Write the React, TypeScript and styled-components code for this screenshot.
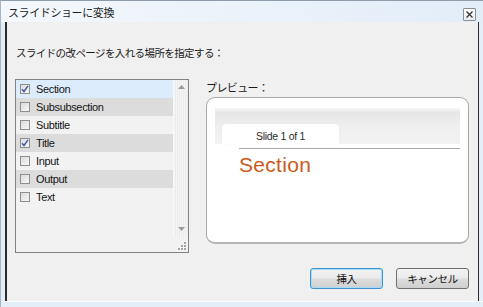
import React from "react";
import styled, { createGlobalStyle, css } from "styled-components";

const Global = createGlobalStyle`
  html, body { margin: 0; padding: 0; background: #e6eff9; }
  body { font-family: "Noto Sans CJK JP", "Liberation Sans", sans-serif; }
  * { box-sizing: border-box; }
`;

const JP = `"Noto Sans CJK JP", "Liberation Sans", sans-serif`;
const LAT = `"Liberation Sans", Arial, sans-serif`;

const Window = styled.div`
  width: 483px;
  height: 307px;
  display: flex;
  flex-direction: column;
  overflow: hidden;
  background: #e4eef9;
  border-top: 1px solid #8e9bab;
  border-left: 1px solid #a9b5c3;
`;

const TitleBar = styled.div`
  height: 21px;
  flex: none;
  display: flex;
  align-items: center;
  justify-content: space-between;
  padding: 0 7px 0 7px;
  background: linear-gradient(to right, #f4f8fc, #e9f1fa 60%, #e3edf8);
`;

const Title = styled.span`
  font-family: ${JP};
  font-size: 11px;
  letter-spacing: -0.4px;
  color: #1f1f1f;
  margin-top: 1px;
`;

const CloseBtn = styled.div`
  width: 13px;
  height: 13px;
  margin-top: 5px;
  border: 1px solid #8a8f96;
  border-radius: 1px;
  background: linear-gradient(#ffffff, #e9ecef);
  display: flex;
  align-items: center;
  justify-content: center;
`;

const Middle = styled.div`
  flex: none;
  height: 279px;
  display: flex;
`;

const SideFrame = styled.div<{ $w: number }>`
  width: ${(p) => p.$w}px;
  flex: none;
`;

const Client = styled.div`
  flex: 1;
  background: #f0f0f0;
  border-left: 2px solid #2c2c2c;
  border-right: 1px solid #2c2c2c;
  padding: 23px 9px 0 8px;
  display: flex;
  flex-direction: column;
`;

const Prompt = styled.div`
  font-family: ${JP};
  font-size: 10.5px;
  line-height: 16px;
  height: 16px;
  letter-spacing: -0.6px;
  color: #1a1a1a;
  padding-left: 1px;
`;

const MainRow = styled.div`
  margin-top: 18px;
  display: flex;
  gap: 17px;
  align-items: flex-start;
`;

const ListBox = styled.div`
  width: 174px;
  height: 174px;
  border: 1px solid #828282;
  background: #f2f2f2;
  display: flex;
  position: relative;
`;

const Rows = styled.div`
  width: 157px;
  height: 122px;
  overflow: hidden;
  flex: none;
`;

const Row = styled.div<{ $tone: "sel" | "alt" | "plain" }>`
  height: 18px;
  display: flex;
  align-items: center;
  padding-left: 4px;
  gap: 6px;
  font-family: ${LAT};
  font-size: 11px;
  letter-spacing: -0.35px;
  color: #141414;
  ${(p) =>
    p.$tone === "sel"
      ? css`background: #dcecfc;`
      : p.$tone === "alt"
      ? css`background: #dcdcdc;`
      : css`background: transparent;`}
`;

const Check = styled.div`
  width: 10px;
  height: 10px;
  border: 1px solid #8e8f8f;
  background: linear-gradient(135deg, #dcdcdc, #f6f6f6);
  flex: none;
  display: flex;
  align-items: center;
  justify-content: center;
`;

const Scroll = styled.div`
  width: 15px;
  height: 157px;
  background: repeating-linear-gradient(90deg, #f4f4f4 0 1px, #ececec 1px 2px);
  border-left: 1px solid #f8f8f8;
  display: flex;
  flex-direction: column;
  justify-content: space-between;
  align-items: center;
  padding: 5px 0 6px;
`;

const Grip = styled.svg`
  position: absolute;
  right: 1px;
  bottom: 1px;
`;

const PreviewCol = styled.div`
  display: flex;
  flex-direction: column;
`;

const PreviewLabel = styled.div`
  font-family: ${JP};
  font-size: 11px;
  line-height: 14px;
  height: 14px;
  letter-spacing: -0.6px;
  color: #1a1a1a;
  margin-bottom: 3px;
  margin-top: 1px;
`;

const PreviewBox = styled.div`
  width: 263px;
  height: 147px;
  background: #ffffff;
  border: 1px solid #a9a9a9;
  border-bottom: 2px solid #b4b4b4;
  border-radius: 9px;
  padding: 10px 8px 0 8px;
  display: flex;
  flex-direction: column;
`;

const Band = styled.div`
  height: 36px;
  background: linear-gradient(#f7f7f7 0px, #e6e6e6 5px, #eeeeee 18px, #f3f3f3 36px);
  display: flex;
  align-items: flex-end;
  padding-left: 7px;
`;

const Tab = styled.div`
  width: 117px;
  height: 20px;
  background: #ffffff;
  border-radius: 4px 4px 0 0;
  box-shadow: 0 0 1px #d6d6d6;
  display: flex;
  align-items: center;
  justify-content: center;
  font-family: ${LAT};
  font-size: 10.5px;
  letter-spacing: -0.3px;
  color: #2d2d2d;
  padding-top: 3px;
`;

const SlideBody = styled.div`
  padding-left: 24px;
  padding-top: 4px;
`;

const Rule = styled.div`
  height: 1px;
  background: #a8a8a8;
`;

const SlideTitle = styled.div`
  font-family: ${LAT};
  font-size: 21px;
  line-height: 24px;
  color: #cc5a1c;
  margin-top: 4px;
  letter-spacing: 0.3px;
`;

const ButtonRow = styled.div`
  margin-top: 15px;
  display: flex;
  justify-content: flex-end;
  gap: 13px;
`;

const Button = styled.div<{ $default?: boolean }>`
  width: 73px;
  height: 21px;
  border-radius: 3px;
  border: 1px solid ${(p) => (p.$default ? "#3d94cf" : "#707070")};
  background: linear-gradient(#f3f3f3 0%, #ebebeb 48%, #dddddd 52%, #cfcfcf 100%);
  ${(p) => p.$default && css`box-shadow: inset 0 0 0 1px #a6dcf6;`}
  display: flex;
  align-items: center;
  justify-content: center;
  font-family: ${JP};
  font-size: 10.5px;
  letter-spacing: -0.4px;
  color: #111;
`;

const BottomFrame = styled.div`
  flex: 1;
  border-top: 1px solid #fbfdff;
  background: #e4eef9;
`;

const items: { label: string; checked: boolean }[] = [
  { label: "Section", checked: true },
  { label: "Subsubsection", checked: false },
  { label: "Subtitle", checked: false },
  { label: "Title", checked: true },
  { label: "Input", checked: false },
  { label: "Output", checked: false },
  { label: "Text", checked: false },
];

const CheckMark = () => (
  <svg width="8" height="8" viewBox="0 0 8 8">
    <path d="M1 4.2 L3 6.5 L7 0.8" fill="none" stroke="#4158a6" strokeWidth="1.4" />
  </svg>
);

export default function App() {
  return (
    <>
      <Global />
      <Window>
        <TitleBar>
          <Title>スライドショーに変換</Title>
          <CloseBtn>
            <svg width="7" height="7" viewBox="0 0 7 7">
              <path d="M0.5 0.5 L6.5 6.5 M6.5 0.5 L0.5 6.5" stroke="#333" strokeWidth="1.3" />
            </svg>
          </CloseBtn>
        </TitleBar>
        <Middle>
          <SideFrame $w={4} />
          <Client>
            <Prompt>スライドの改ページを入れる場所を指定する：</Prompt>
            <MainRow>
              <ListBox>
                <Rows>
                  {items.map((it, i) => (
                    <Row key={it.label} $tone={i === 0 ? "sel" : i % 2 === 1 ? "alt" : "plain"}>
                      <Check>{it.checked && <CheckMark />}</Check>
                      <span>{it.label}</span>
                    </Row>
                  ))}
                </Rows>
                <Scroll>
                  <svg width="7" height="4" viewBox="0 0 7 4">
                    <path d="M0 4 L3.5 0 L7 4 Z" fill="#9a9a9a" />
                  </svg>
                  <svg width="7" height="4" viewBox="0 0 7 4">
                    <path d="M0 0 L3.5 4 L7 0 Z" fill="#9a9a9a" />
                  </svg>
                </Scroll>
                <Grip width="9" height="9" viewBox="0 0 9 9">
                  <g fill="#a4a4a4">
                    <rect x="6" y="0" width="2" height="2" />
                    <rect x="3" y="3" width="2" height="2" />
                    <rect x="6" y="3" width="2" height="2" />
                    <rect x="0" y="6" width="2" height="2" />
                    <rect x="3" y="6" width="2" height="2" />
                    <rect x="6" y="6" width="2" height="2" />
                  </g>
                </Grip>
              </ListBox>
              <PreviewCol>
                <PreviewLabel>プレビュー：</PreviewLabel>
                <PreviewBox>
                  <Band>
                    <Tab>Slide 1 of 1</Tab>
                  </Band>
                  <SlideBody>
                    <Rule />
                    <SlideTitle>Section</SlideTitle>
                  </SlideBody>
                </PreviewBox>
              </PreviewCol>
            </MainRow>
            <ButtonRow>
              <Button $default>挿入</Button>
              <Button>キャンセル</Button>
            </ButtonRow>
          </Client>
          <SideFrame $w={7} />
        </Middle>
        <BottomFrame />
      </Window>
    </>
  );
}
